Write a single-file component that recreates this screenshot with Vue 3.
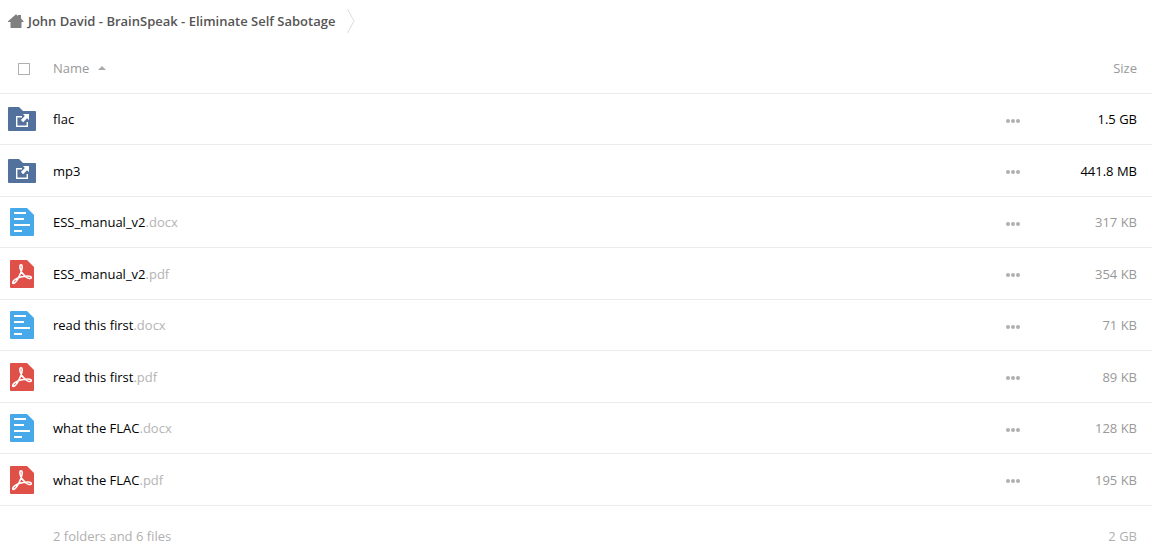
<script setup>
import { ref } from 'vue'

const allSelected = ref(false)

const items = [
  { kind: 'folder', name: 'flac', ext: '', size: '1.5 GB' },
  { kind: 'folder', name: 'mp3', ext: '', size: '441.8 MB' },
  { kind: 'doc', name: 'ESS_manual_v2', ext: '.docx', size: '317 KB' },
  { kind: 'pdf', name: 'ESS_manual_v2', ext: '.pdf', size: '354 KB' },
  { kind: 'doc', name: 'read this first', ext: '.docx', size: '71 KB' },
  { kind: 'pdf', name: 'read this first', ext: '.pdf', size: '89 KB' },
  { kind: 'doc', name: 'what the FLAC', ext: '.docx', size: '128 KB' },
  { kind: 'pdf', name: 'what the FLAC', ext: '.pdf', size: '195 KB' }
]
</script>

<template>
  <main class="page">
    <nav class="crumbs" aria-label="Breadcrumb">
      <a class="crumb" href="#">
        <svg class="home" width="16" height="14" viewBox="0 0 16 14" aria-hidden="true">
          <path d="M8 0.3 L10 2 V1 H13 V4.6 L15.6 7.2 V8 H13.5 V14 H2.5 V8 H0 V7.2 Z" fill="#808080" />
        </svg>
        <span>John David - BrainSpeak - Eliminate Self Sabotage</span>
      </a>
      <svg class="chevron" width="8" height="26" viewBox="0 0 8 26" aria-hidden="true">
        <path d="M0.5 1 L7 13 L0.5 25" fill="none" stroke="#dcdcdc" stroke-width="1" />
      </svg>
    </nav>

    <table class="files">
      <thead>
        <tr>
          <th class="icon-col" scope="col">
            <input v-model="allSelected" class="check" type="checkbox" aria-label="Select all" />
          </th>
          <th class="name-col" scope="col">
            <button class="sort" type="button">
              Name
              <svg width="8" height="4" viewBox="0 0 8 4" aria-hidden="true">
                <path d="M4 0 L8 4 H0 Z" fill="#aaaaaa" />
              </svg>
            </button>
          </th>
          <th class="menu-col"></th>
          <th class="size-col" scope="col"><button class="sort" type="button">Size</button></th>
        </tr>
      </thead>
      <tbody>
        <tr v-for="item in items" :key="item.name + item.ext" :class="item.kind">
          <td class="icon-col">
            <svg v-if="item.kind === 'folder'" class="icon" width="28" height="24" viewBox="0 0 28 24" aria-hidden="true">
              <path d="M0 1 Q0 0 1 0 H11 L15 4 H27 Q28 4 28 5 V23 Q28 24 27 24 H1 Q0 24 0 23 Z" fill="#53719d" />
              <path d="M14 9.7 H8.7 V19.3 H19.3 V15" fill="none" stroke="#fff" stroke-width="1.4" />
              <path d="M15 7 H21 V13 L19 11.2 L15.2 15.2 L12.9 12.9 L16.8 9 Z" fill="#fff" />
            </svg>
            <svg v-else-if="item.kind === 'doc'" class="icon" width="24" height="28" viewBox="0 0 24 28" aria-hidden="true">
              <path d="M1 0 H17 L24 7 V27 Q24 28 23 28 H1 Q0 28 0 27 V1 Q0 0 1 0 Z" fill="#47a8ea" />
              <path d="M4 5 H16 M4 11 H14 M4 17 H20 M4 23 H12" stroke="#fff" stroke-width="2" />
            </svg>
            <svg v-else class="icon" width="24" height="28" viewBox="0 0 24 28" aria-hidden="true">
              <path d="M1 0 H17 L24 7 V27 Q24 28 23 28 H1 Q0 28 0 27 V1 Q0 0 1 0 Z" fill="#df5048" />
              <path
                d="M11 4.8 C9.6 4.8 9.6 7 10.4 9.2 C11.4 12.4 14 15.6 17 17.6 C19.4 19 21.4 18.8 21.4 17.6 C21.4 16.2 18.6 15.8 15.4 16.2 C11.4 16.6 7 17.8 4.6 19.8 C2.6 21.4 2.2 23.4 3.4 23.4 C5 23.4 7.6 19.6 9.4 15.8 C11.2 12 12.4 8.4 12.2 6.4 C12.1 5.2 11.8 4.8 11 4.8 Z"
                fill="none"
                stroke="#fff"
                stroke-width="1.6"
                stroke-linejoin="round"
              />
            </svg>
          </td>
          <td class="name-col">
            <a class="file" href="#">{{ item.name }}<span class="ext">{{ item.ext }}</span></a>
          </td>
          <td class="menu-col">
            <button class="more" type="button" :aria-label="'Actions for ' + item.name + item.ext">
              <svg width="14" height="4" viewBox="0 0 14 4" aria-hidden="true">
                <circle cx="2" cy="2" r="2" />
                <circle cx="7" cy="2" r="2" />
                <circle cx="12" cy="2" r="2" />
              </svg>
            </button>
          </td>
          <td class="size-col">{{ item.size }}</td>
        </tr>
      </tbody>
      <tfoot>
        <tr>
          <td class="icon-col"></td>
          <td class="name-col">2 folders and 6 files</td>
          <td class="menu-col"></td>
          <td class="size-col">2 GB</td>
        </tr>
      </tfoot>
    </table>
  </main>
</template>

<style>
body {
  background: #fff;
}
</style>

<style scoped>
.page {
  font: 13px/20px 'Open Sans', 'Noto Sans', sans-serif;
  color: #000;
}

.crumbs {
  display: flex;
  align-items: center;
  gap: 12px;
  height: 42px;
  padding-left: 8px;
}

.crumb {
  display: flex;
  align-items: center;
  gap: 4px;
  color: #555;
  font-weight: 600;
  text-decoration: none;
}

.home,
.chevron,
.icon,
.more svg {
  display: block;
}

.files {
  width: 100%;
  table-layout: fixed;
  border-collapse: separate;
  border-spacing: 0;
}

th,
td {
  box-sizing: border-box;
  height: 51px;
  padding: 0;
  border-bottom: 1px solid #ebebeb;
  text-align: left;
  vertical-align: middle;
  font-weight: 400;
}

th {
  height: 52px;
  color: #999;
}

th.icon-col {
  padding-top: 2px;
}

tbody tr:nth-child(even) td {
  height: 52px;
  padding-top: 1px;
}

.icon-col {
  width: 53px;
}

td.icon-col {
  padding-left: 8px;
}

.doc .icon-col,
.pdf .icon-col {
  padding-left: 10px;
}

.menu-col {
  width: 60px;
}

tbody tr td.menu-col {
  padding-top: 4px;
}

tbody tr:nth-child(even) td.menu-col {
  padding-top: 3px;
}

.size-col {
  width: 86px;
  padding-right: 15px;
  text-align: right;
}

.check {
  display: block;
  appearance: none;
  box-sizing: border-box;
  width: 12px;
  height: 12px;
  margin: 0 0 0 18px;
  border: 1px solid #b0b0b0;
  background: #fff;
}

.check:checked {
  background: #b0b0b0;
}

.sort,
.more {
  padding: 0;
  border: 0;
  background: none;
  color: inherit;
  font: inherit;
  cursor: pointer;
}

.sort {
  display: inline-flex;
  align-items: center;
  gap: 9px;
  vertical-align: top;
}

.more {
  display: block;
}

.more svg {
  fill: #b0b0b0;
}

.file {
  color: #000;
  text-decoration: none;
}

.ext {
  color: #b4b4b4;
}

.doc .size-col,
.pdf .size-col {
  color: #999;
}

tfoot td {
  height: 47px;
  padding-top: 12px;
  border-bottom: 0;
  color: #b0b0b0;
}
</style>
